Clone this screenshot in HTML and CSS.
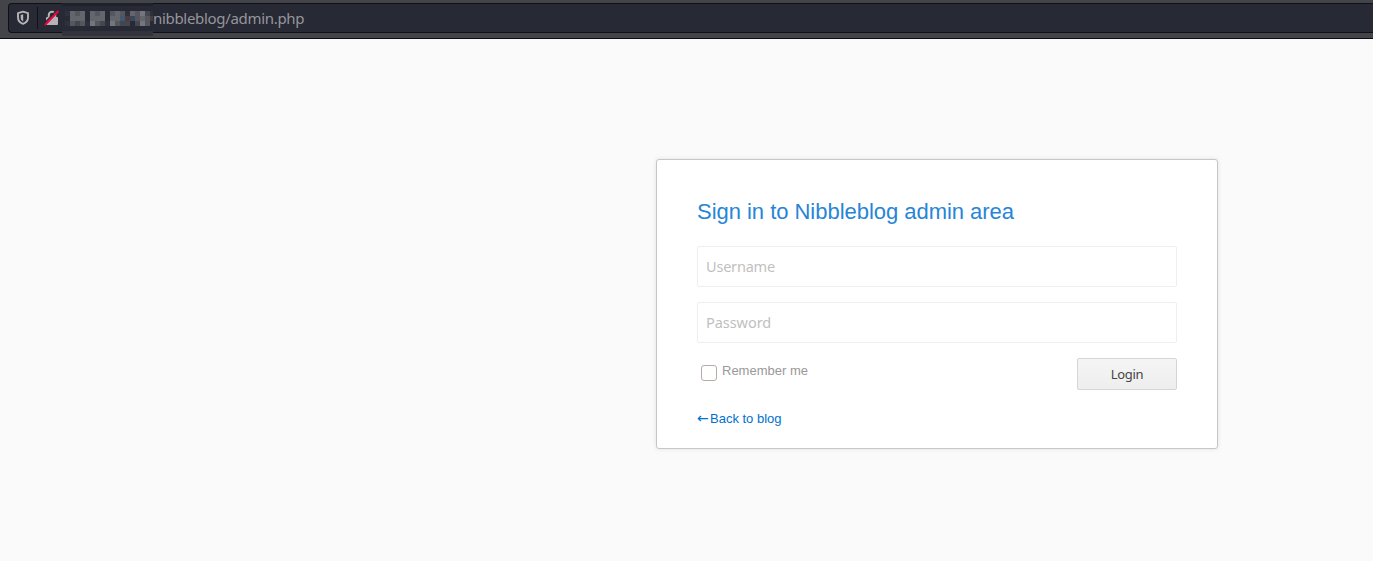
FILE: index.html
```html
<!DOCTYPE html>
<html lang="en">
<head>
<meta charset="utf-8">
<title>Nibbleblog</title>
<link rel="stylesheet" href="styles.css">
</head>
<body>
<header class="toolbar">
  <div class="urlbar">
    <svg class="shield" viewBox="0 0 14 16" width="14" height="16"><path d="M7 1.700 12 3.200v4.300c0 3-1.800 5.300-5 6.300-3.200-1-5-3.300-5-6.300V3.200z" fill="none" stroke="#b4b4b7" stroke-width="1.900" stroke-linejoin="round"/><path d="M7.200 4.200 4.700 5v2.800c0 1.800.9 3 2.500 3.800z" fill="#b4b4b7"/></svg>
    <span class="divider"></span>
    <svg class="lock" viewBox="0 0 16 16" width="16" height="16"><path d="M4.800 8V5a3.200 3.200 0 0 1 6.400 0v3" fill="none" stroke="#b4b4b7" stroke-width="2"/><rect x="2" y="7" width="12" height="8" rx="1" fill="#b4b4b7"/><path d="M0 14 13 0" stroke="#272935" stroke-width="1.600"/><path d="M1 15 14.500 1" stroke="#f5003c" stroke-width="1.900"/></svg>
    <span class="url">nibbleblog/admin.php</span>
  </div>
  <svg class="redaction" viewBox="0 0 91 33" width="91" height="33" shape-rendering="crispEdges">
    <path fill="#272934" d="M0 0h91v33H0z"/><path fill="#20222b" d="M0 0h91v3H0z"/><path fill="#32343b" d="M0 28h91v5H0z"/>
    <path fill="#2e313d" d="M3 8h5v5H3zM3 18h5v5H3zM23 18h5v5h-5zM43 18h5v5h-5zM63 8h5v5h-5zM88 8h3v5h-3z"/>
    <path fill="#65666d" d="M8 8h5v5H8zM18 8h5v5h-5zM28 8h5v5h-5zM38 8h5v5h-5zM53 8h5v5h-5zM68 8h5v5h-5zM8 13h15v5H8zM28 13h15v5H28zM48 13h10v5H48zM78 13h5v5h-5z"/>
    <path fill="#55565e" d="M13 8h5v5h-5zM33 8h5v5h-5zM48 8h5v5h-5zM58 8h5v5h-5zM73 8h5v5h-5zM8 18h5v5H8zM18 18h5v5h-5zM33 18h5v5h-5zM53 18h5v5h-5zM73 13h5v5h-5zM83 13h5v5h-5zM83 18h5v5h-5z"/>
    <path fill="#75767d" d="M28 18h5v5h-5zM48 18h5v5h-5zM78 8h5v5h-5zM78 18h5v5h-5z"/>
    <path fill="#454750" d="M13 18h5v5h-5zM38 18h5v5h-5zM58 18h10v5H58zM73 18h5v5h-5zM83 8h5v5h-5z"/>
    <path fill="#42586e" d="M58 13h5v5h-5z"/><path fill="#4b3b3f" d="M63 13h5v5h-5zM88 13h3v5h-3z"/><path fill="#384759" d="M68 13h5v5h-5z"/>
  </svg>
</header>
<main class="page">
  <form class="card">
    <h1 class="title">Sign in to Nibbleblog admin area</h1>
    <input class="field" type="text" placeholder="Username">
    <input class="field password" type="password" placeholder="Password">
    <div class="actions">
      <label class="remember"><input class="check" type="checkbox"><span class="remember-text">Remember me</span></label>
      <button class="login" type="button">Login</button>
    </div>
    <a class="back" href="#"><span class="arrow">←</span>Back to blog</a>
  </form>
</main>
</body>
</html>
```
FILE: styles.css
```css
* { box-sizing: border-box; }
body { margin: 0; height: 561px; overflow: hidden; background: #fafafa; font-family: "Liberation Sans", Arial, sans-serif; }
.toolbar { position: relative; height: 39px; padding: 3px 0 0 8px; background: #42444a; border-bottom: 1px solid #0c0c10; }
.urlbar { display: flex; align-items: center; height: 30px; background: #272935; border: 1px solid #101116; border-right: 0; border-radius: 4px 0 0 4px; }
.shield { margin-left: 7px; }
.divider { width: 1px; height: 22px; margin-left: 7px; background: #111218; }
.lock { margin-left: 6px; }
.url { margin-left: 93px; font: 15px/20px "Noto Sans", sans-serif; letter-spacing: -.31px; color: #96969b; }
.redaction { position: absolute; left: 62px; top: 3px; }
.page { padding: 120px 0 0 656px; }
.card { width: 562px; height: 290px; padding: 37px 40px 0; background: #fff; border: 1px solid #c6c6c6; border-radius: 3px; box-shadow: 0 0 4px rgba(0,0,0,.1); }
.title { margin: 0 0 19px; font-size: 22px; line-height: 30px; font-weight: 400; letter-spacing: -.03px; color: #2785d6; }
.field { display: block; width: 480px; height: 41px; margin: 0 0 15px; padding: 0 8px 2px; border: 1px solid #eee; border-radius: 2px; background: #fff; font: 14.500px "Noto Sans", sans-serif; letter-spacing: -.2px; color: #444; }
.password { letter-spacing: -.05px; }
.field::placeholder { color: #bfbfbf; opacity: 1; }
.actions { display: flex; justify-content: space-between; height: 32px; }
.remember { display: flex; align-items: flex-start; padding-left: 4px; }
.check { appearance: none; width: 16px; height: 16px; margin: 7px 5px 0 0; border: 1px solid #b5aaa5; border-radius: 3px; background: #fff; }
.remember-text { padding-top: 4px; font-size: 13px; line-height: 17px; color: #999; }
.login { width: 100px; height: 32px; padding: 0; border: 1px solid #d5d5d5; border-radius: 2px; background: linear-gradient(#f5f5f5, #eee); font: 13px "Noto Sans", sans-serif; letter-spacing: -.3px; color: #444; }
.back { display: flex; width: max-content; margin-top: 20px; font-size: 13px; line-height: 17px; color: #0072cc; text-decoration: none; }
.arrow { width: 13px; font-family: "DejaVu Sans", sans-serif; font-size: 14px; }
```
